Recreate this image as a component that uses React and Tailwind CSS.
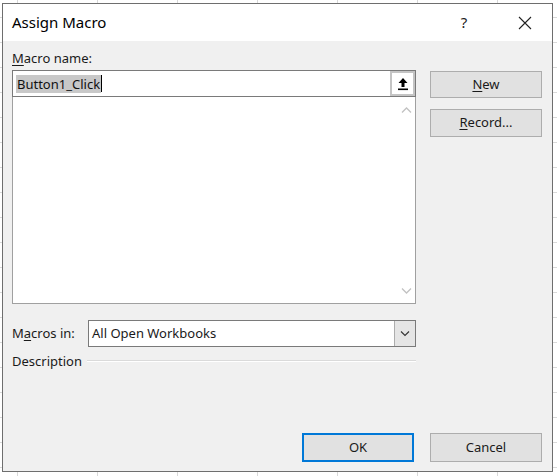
import React from "react";

function Underline({ children }) {
  return <span className="underline underline-offset-[2px] decoration-[1px]">{children}</span>;
}

function Btn({ children, className = "" }) {
  return (
    <div
      className={
        "flex items-center justify-center bg-[#e1e1e1] border border-[#adadad] text-[13px] text-[#1a1a1a] " +
        className
      }
    >
      {children}
    </div>
  );
}

export default function App() {
  return (
    <div
      className="w-[557px] h-[476px] overflow-hidden bg-white pt-[3px] pl-[2px] bg-[linear-gradient(to_right,#d9d9d9_1px,transparent_1px),linear-gradient(to_bottom,#d9d9d9_1px,transparent_1px)] bg-[size:80px_25px] bg-[position:17px_17px]"
      style={{ fontFamily: '"Noto Sans", "Open Sans", sans-serif' }}
    >
      <div className="w-[551px] h-[469px] border border-[#6e6e6e] bg-[#f0f0f0] flex flex-col">
        {/* Title bar */}
        <div className="h-[37px] bg-white flex items-center shrink-0">
          <div className="pl-[9px] text-[15px] text-black flex-1">Assign Macro</div>
          <div className="w-[40px] text-center text-[15px] text-[#222] mr-[18px]">?</div>
          <div className="w-[46px] h-[37px] flex items-center justify-center mr-[4px]">
            <svg width="14" height="14" viewBox="0 0 14 14">
              <path d="M1 1 L13 13 M13 1 L1 13" stroke="#222" strokeWidth="1.1" fill="none" />
            </svg>
          </div>
        </div>

        {/* Body */}
        <div className="flex-1 flex flex-col pl-[9px] pr-[10px]">
          <div className="flex">
            {/* Left column */}
            <div className="w-[404px] flex flex-col">
              <div className="mt-[8px] h-[18px] leading-[18px] text-[13px] text-[#1a1a1a]">
                <Underline>M</Underline>acro name:
              </div>
              <div className="mt-[3px] h-[27px] border border-[#7a7a7a] bg-white flex">
                <div className="flex-1 flex items-center pl-[3px]">
                  <span className="bg-[#c8c8c8] text-[13px] leading-[18px] text-[#111] px-[1px]">Button1_Click</span>
                  <span className="w-[1px] h-[17px] bg-black" />
                </div>
                <div className="w-[25px] border-[2px] border-[#c4c4c4] bg-white flex items-center justify-center">
                  <svg width="12" height="14" viewBox="0 0 12 14">
                    <path d="M6 1 L1.5 6 H4.5 V10 H7.5 V6 H10.5 Z" fill="#000" />
                    <rect x="1" y="11.5" width="10" height="1.6" fill="#000" />
                  </svg>
                </div>
              </div>
              <div className="h-[207px] border border-[#a0a0a0] border-t-0 bg-white flex justify-end">
                <div className="w-[17px] flex flex-col justify-between items-center pt-[10px] pb-[9px]">
                  <svg width="11" height="6" viewBox="0 0 11 6">
                    <path d="M1 5.5 L5.5 1 L10 5.5" stroke="#c2c2c2" strokeWidth="1.3" fill="none" />
                  </svg>
                  <svg width="11" height="6" viewBox="0 0 11 6">
                    <path d="M1 0.5 L5.5 5 L10 0.5" stroke="#c2c2c2" strokeWidth="1.3" fill="none" />
                  </svg>
                </div>
              </div>

              <div className="mt-[16px] flex items-center">
                <div className="w-[76px] text-[13px] text-[#1a1a1a]">
                  M<Underline>a</Underline>cros in:
                </div>
                <div className="flex-1 h-[27px] border border-[#7a7a7a] bg-white flex">
                  <div className="flex-1 flex items-center pl-[3px] text-[13px] text-[#1a1a1a]">All Open Workbooks</div>
                  <div className="w-[21px] bg-[#e5e5e5] border-l border-[#adadad] flex items-center justify-center">
                    <svg width="10" height="6" viewBox="0 0 10 6">
                      <path d="M1 0.5 L5 4.5 L9 0.5" stroke="#333" strokeWidth="1.1" fill="none" />
                    </svg>
                  </div>
                </div>
              </div>

              <div className="mt-[4px] flex items-center">
                <div className="text-[13px] text-[#1a1a1a] leading-[20px]">Description</div>
                <div className="flex-1 ml-[5px] flex flex-col">
                  <div className="h-[1px] bg-[#dadada]" />
                  <div className="h-[1px] bg-white" />
                </div>
              </div>
            </div>

            {/* Right column */}
            <div className="ml-[14px] w-[112px] flex flex-col pt-[30px] gap-[11px]">
              <Btn className="h-[27px]">
                <Underline>N</Underline>ew
              </Btn>
              <Btn className="h-[28px]">
                <Underline>R</Underline>ecord...
              </Btn>
            </div>
          </div>

          <div className="flex-1" />
          <div className="flex justify-end gap-[16px] pb-[9px]">
            <div className="w-[112px] h-[29px] flex items-center justify-center bg-[#e1e1e1] border-[2px] border-[#0078d7] text-[13px] text-[#1a1a1a]">
              OK
            </div>
            <Btn className="w-[112px] h-[29px]">Cancel</Btn>
          </div>
        </div>
      </div>
    </div>
  );
}
